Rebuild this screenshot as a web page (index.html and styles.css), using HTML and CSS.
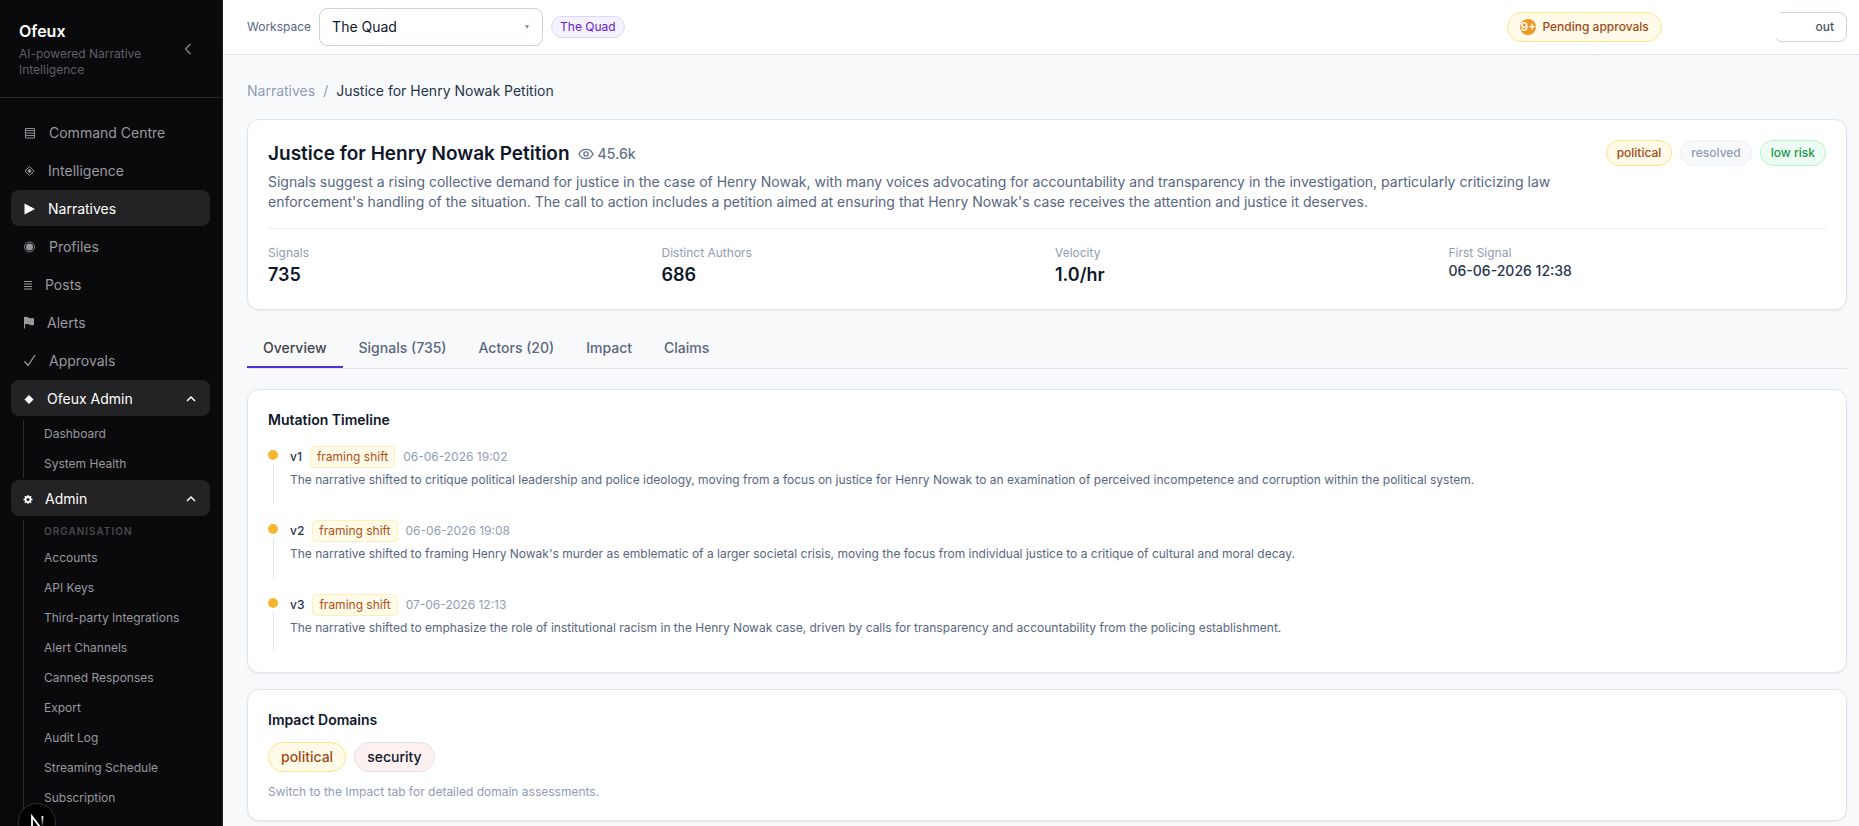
FILE: index.html
```html
<!DOCTYPE html>
<html lang="en">
<head>
    <meta charset="UTF-8">
    <meta name="viewport" content="width=device-width, initial-scale=1.0">
    <title>Justice for Henry Nowak Petition - Ofeux</title>
    <link rel="stylesheet" href="styles.css">
</head>
<body>
    <aside class="sidebar">
        <div class="brand">
            <div>
                <div class="brand-name">Ofeux</div>
                <div class="brand-tagline">AI-powered Narrative Intelligence</div>
            </div>
            <button class="collapse" type="button" aria-label="Collapse sidebar">
                <svg width="8" height="12" viewBox="0 0 8 12"><path d="M6.5 1L1.5 6l5 5" fill="none" stroke="currentColor" stroke-width="1.3"/></svg>
            </button>
        </div>

        <nav class="nav">
            <a class="nav-item" href="#">
                <svg width="14" height="14" viewBox="0 0 14 14" fill="none" stroke="currentColor" stroke-width="0.9"><path d="M2.500 2.500h9v9.500h-9zM2.500 4.500h9M2.500 7h9M2.500 9.500h9"/></svg>
                Command Centre
            </a>
            <a class="nav-item" href="#">
                <svg width="13" height="14" viewBox="0 0 13 14"><path d="M6.500 2.500L11 7 6.500 11.500 2 7z" fill="none" stroke="currentColor" stroke-width="0.9"/><path d="M6.500 4.800L8.700 7 6.500 9.200 4.300 7z" fill="currentColor"/></svg>
                Intelligence
            </a>
            <a class="nav-item active" href="#">
                <svg width="13" height="14" viewBox="0 0 13 14"><path d="M1.500 1.500L12 7 1.500 12.500z" fill="currentColor"/></svg>
                Narratives
            </a>
            <a class="nav-item" href="#">
                <svg width="14" height="14" viewBox="0 0 14 14"><circle cx="6.500" cy="7" r="5" fill="none" stroke="currentColor" stroke-width="0.800"/><circle cx="6.500" cy="7" r="3.500" fill="currentColor"/></svg>
                Profiles
            </a>
            <a class="nav-item" href="#">
                <svg width="10" height="14" viewBox="0 0 10 14"><path d="M1 3.500h8M1 6h8M1 8.500h8M1 11h8" stroke="currentColor"/></svg>
                Posts
            </a>
            <a class="nav-item" href="#">
                <svg width="12" height="14" viewBox="0 0 12 14"><path d="M1 12.500V1C3 0.500 4.500 1 6 1.700S9 2.400 11 2v7C9 9.500 7.500 9.200 6 8.600S3.500 8 2 8.400v4.100z" fill="currentColor"/></svg>
                Alerts
            </a>
            <a class="nav-item" href="#">
                <svg width="14" height="14" viewBox="0 0 14 14"><path d="M1.500 7.500L5 11.500 12 1" fill="none" stroke="currentColor" stroke-width="1.300"/></svg>
                Approvals
            </a>

            <button class="nav-item active" type="button">
                <svg width="12" height="14" viewBox="0 0 12 14"><path d="M6 3l4.500 4.500L6 12 1.500 7.500z" fill="currentColor"/></svg>
                Ofeux Admin
                <svg class="chevron" width="10" height="8" viewBox="0 0 10 8"><path d="M1 6l4-4 4 4" fill="none" stroke="currentColor" stroke-width="1.500"/></svg>
            </button>
            <div class="subnav">
                <a class="subnav-item" href="#">Dashboard</a>
                <a class="subnav-item" href="#">System Health</a>
            </div>

            <button class="nav-item active" type="button">
                <svg width="10" height="14" viewBox="0 0 10 14"><circle cx="5" cy="7.500" r="2.500" fill="none" stroke="currentColor" stroke-width="1.800"/><path d="M5 3v2M5 10v2M0.500 7.500h2M7.500 7.500h2M1.800 4.300l1.400 1.400M6.800 9.300l1.400 1.400M8.200 4.300L6.800 5.700M3.200 9.300l-1.400 1.400" stroke="currentColor" stroke-width="1.300"/></svg>
                Admin
                <svg class="chevron" width="10" height="8" viewBox="0 0 10 8"><path d="M1 6l4-4 4 4" fill="none" stroke="currentColor" stroke-width="1.500"/></svg>
            </button>
            <div class="subnav">
                <div class="subnav-heading">Organisation</div>
                <a class="subnav-item" href="#">Accounts</a>
                <a class="subnav-item" href="#">API Keys</a>
                <a class="subnav-item" href="#">Third-party Integrations</a>
                <a class="subnav-item" href="#">Alert Channels</a>
                <a class="subnav-item" href="#">Canned Responses</a>
                <a class="subnav-item" href="#">Export</a>
                <a class="subnav-item" href="#">Audit Log</a>
                <a class="subnav-item" href="#">Streaming Schedule</a>
                <a class="subnav-item" href="#">Subscription</a>
            </div>
        </nav>

        <!-- Dev tools button, sits over the bottom of the nav -->
        <button class="dev-badge" type="button" aria-label="Dev tools">
            <svg width="36" height="36" viewBox="0 0 36 36" fill="none" stroke-width="1.800">
                <defs><linearGradient id="fade" x1="0" y1="0" x2="0" y2="1"><stop offset="0" stop-color="#fff"/><stop offset="1" stop-color="#fff" stop-opacity="0"/></linearGradient></defs>
                <path d="M13 24V12.500L24 27" stroke="#fff"/>
                <path d="M22.500 12h1.800v11h-1.800z" fill="url(#fade)"/>
            </svg>
        </button>
    </aside>

    <div class="page">
        <header class="topbar">
            <label class="topbar-label" for="workspace">Workspace</label>
            <div class="select-wrap">
                <select id="workspace" class="select">
                    <option>The Quad</option>
                </select>
                <svg class="select-arrow" width="4" height="4" viewBox="0 0 4 4"><path d="M0 0h4L2 4z" fill="currentColor"/></svg>
            </div>
            <span class="pill pill-violet">The Quad</span>
            <div class="topbar-right">
                <a class="pending" href="#"><span class="count">9+</span>Pending approvals</a>
                <button class="sign-out" type="button">Sign out<span class="cover"></span></button>
            </div>
        </header>

        <main class="content">
            <nav class="breadcrumb">
                <a href="#">Narratives</a>
                <span>/</span>
                <span class="current">Justice for Henry Nowak Petition</span>
            </nav>

            <section class="card">
                <div class="summary">
                    <div class="summary-text">
                        <div class="title-row">
                            <h1>Justice for Henry Nowak Petition</h1>
                            <span class="views">
                                <svg width="16" height="16" viewBox="0 0 16 16" fill="none" stroke="currentColor" stroke-width="1.300"><path d="M1 8c1.300-3 4-4.700 7-4.700S13.700 5 15 8c-1.300 3-4 4.700-7 4.700S2.300 11 1 8z"/><circle cx="8" cy="8" r="2.100"/></svg>
                                45.6k
                            </span>
                        </div>
                        <p class="description">Signals suggest a rising collective demand for justice in the case of Henry Nowak, with many voices advocating for accountability and transparency in the investigation, particularly criticizing law enforcement's handling of the situation. The call to action includes a petition aimed at ensuring that Henry Nowak's case receives the attention and justice it deserves.</p>
                    </div>
                    <div class="tags">
                        <span class="tag amber">political</span>
                        <span class="tag grey">resolved</span>
                        <span class="tag green">low risk</span>
                    </div>
                </div>
                <dl class="stats">
                    <div><dt>Signals</dt><dd>735</dd></div>
                    <div><dt>Distinct Authors</dt><dd>686</dd></div>
                    <div><dt>Velocity</dt><dd>1.0/hr</dd></div>
                    <div><dt>First Signal</dt><dd class="date">06-06-2026 12:38</dd></div>
                </dl>
            </section>

            <div class="tabs" role="tablist">
                <button class="tab selected" type="button" role="tab">Overview</button>
                <button class="tab" type="button" role="tab">Signals (735)</button>
                <button class="tab" type="button" role="tab">Actors (20)</button>
                <button class="tab" type="button" role="tab">Impact</button>
                <button class="tab" type="button" role="tab">Claims</button>
            </div>

            <section class="card">
                <h2>Mutation Timeline</h2>
                <ol class="timeline">
                    <li class="event">
                        <div class="marker"></div>
                        <div class="event-body">
                            <div class="event-head"><b>v1</b><span class="shift">framing shift</span><time>06-06-2026 19:02</time></div>
                            <p>The narrative shifted to critique political leadership and police ideology, moving from a focus on justice for Henry Nowak to an examination of perceived incompetence and corruption within the political system.</p>
                        </div>
                    </li>
                    <li class="event">
                        <div class="marker"></div>
                        <div class="event-body">
                            <div class="event-head"><b>v2</b><span class="shift">framing shift</span><time>06-06-2026 19:08</time></div>
                            <p>The narrative shifted to framing Henry Nowak's murder as emblematic of a larger societal crisis, moving the focus from individual justice to a critique of cultural and moral decay.</p>
                        </div>
                    </li>
                    <li class="event">
                        <div class="marker"></div>
                        <div class="event-body">
                            <div class="event-head"><b>v3</b><span class="shift">framing shift</span><time>07-06-2026 12:13</time></div>
                            <p>The narrative shifted to emphasize the role of institutional racism in the Henry Nowak case, driven by calls for transparency and accountability from the policing establishment.</p>
                        </div>
                    </li>
                </ol>
            </section>

            <section class="card">
                <h2>Impact Domains</h2>
                <div class="domains">
                    <span class="domain amber">political</span>
                    <span class="domain rose">security</span>
                </div>
                <p class="hint">Switch to the Impact tab for detailed domain assessments.</p>
            </section>
        </main>
    </div>
</body>
</html>
```

FILE: styles.css
```css
* {
    box-sizing: border-box;
}

body {
    margin: 0;
    display: flex;
    height: 100vh;
    overflow: hidden;
    background-color: #f8f9fb;
    color: #0f172a;
    font-family: Inter, "Liberation Sans", sans-serif;
    font-size: 14px;
    line-height: 20px;
}

h1, h2, p, dl, dd, ol {
    margin: 0;
    padding: 0;
}

a {
    color: inherit;
    text-decoration: none;
}

button, select {
    font: inherit;
    cursor: pointer;
}

/* Sidebar */
.sidebar {
    position: relative;
    flex: none;
    width: 223px;
    overflow: hidden;
    background-color: #0a0a0c;
    border-right: 1px solid #232325;
}

.brand {
    display: flex;
    align-items: center;
    justify-content: space-between;
    height: 98px;
    padding: 0 24px 0 19px;
    border-bottom: 1px solid #28282a;
}

.brand-name {
    color: #fff;
    font-size: 16px;
    font-weight: 600;
    line-height: 24px;
    margin-bottom: 3px;
}

.brand-tagline {
    width: 140px;
    color: #5f5f68;
    font-size: 12px;
    line-height: 16px;
}

.collapse {
    display: flex;
    padding: 6px;
    border: none;
    background: none;
    color: #85858e;
}

.nav {
    display: flex;
    flex-direction: column;
    gap: 2px;
    padding: 16px 12px 0 11px;
}

.nav-item {
    display: flex;
    align-items: center;
    gap: 12px;
    flex: none;
    height: 36px;
    padding: 2px 14px 0 12px;
    border: none;
    border-radius: 8px;
    background: none;
    color: #98989f;
    text-align: left;
}

.nav-item.active {
    background-color: #232325;
    color: #fff;
}

.chevron {
    margin-left: auto;
}

.subnav {
    display: flex;
    flex-direction: column;
    gap: 2px;
    margin: 2px 0 0 12px;
    padding-left: 20px;
    border-left: 1px solid #2c2c2f;
}

.subnav-item {
    padding: 6px 0;
    color: #98989f;
    font-size: 12px;
    line-height: 16px;
}

.subnav-heading {
    color: #48484f;
    font-size: 10px;
    font-weight: 600;
    letter-spacing: 1px;
    line-height: 22px;
    text-transform: uppercase;
}

.dev-badge {
    position: absolute;
    left: 19px;
    bottom: -14px;
    width: 36px;
    height: 36px;
    padding: 0;
    border: none;
    border-radius: 50%;
    background-color: #000;
    box-shadow: 0 0 0 1px #2b2b2b;
}

/* Top bar */
.page {
    display: flex;
    flex-direction: column;
    flex: 1;
    min-width: 0;
}

.topbar {
    display: flex;
    align-items: center;
    gap: 8px;
    padding: 8px 12px 8px 24px;
    background-color: #fff;
    border-bottom: 1px solid #dfe4ee;
    font-size: 12px;
    line-height: 16px;
}

.topbar-label {
    color: #58667e;
}

.select-wrap {
    position: relative;
    width: 224px;
}

.select {
    display: block;
    width: 100%;
    height: 38px;
    padding: 0 12px;
    appearance: none;
    border: 1px solid #c8d2e0;
    border-radius: 8px;
    background-color: #fff;
    color: #0f172a;
    font-size: 14px;
}

.select-arrow {
    position: absolute;
    right: 14px;
    top: 17px;
    color: #8090a8;
    pointer-events: none;
}

.pill {
    padding: 2px 8px;
    border: 1px solid;
    border-radius: 11px;
}

.pill-violet {
    background-color: #f5f3ff;
    border-color: #ddd6fe;
    color: #6419d0;
}

.topbar-right {
    display: flex;
    align-items: center;
    gap: 112px;
    margin-left: auto;
}

.pending {
    display: flex;
    align-items: center;
    gap: 6px;
    padding: 6px 12px;
    border: 1px solid #fae588;
    border-radius: 15px;
    background-color: #fffbe8;
    color: #9f4a16;
    font-weight: 500;
}

.count {
    display: flex;
    align-items: center;
    justify-content: center;
    width: 16px;
    height: 16px;
    border-radius: 50%;
    background-color: #ee9722;
    color: #fff;
    font-weight: 600;
}

.sign-out {
    position: relative;
    padding: 6px 12px;
    border: 1px solid #c8d2e0;
    border-radius: 8px;
    background-color: #fff;
    color: #475569;
    font-weight: 500;
}

.cover {
    position: absolute;
    left: -1px;
    top: 0;
    width: 38px;
    height: 25px;
    background-color: #fff;
}

/* Content */
.content {
    padding: 24px 12px 0 24px;
}

.breadcrumb {
    display: flex;
    gap: 8px;
    margin-bottom: 18px;
    padding-top: 2px;
    color: #8f9db3;
}

.breadcrumb .current {
    color: #27344a;
}

.card {
    padding: 20px;
    background-color: #fff;
    border: 1px solid #dfe4ee;
    border-radius: 12px;
    box-shadow: 0 1px 2px rgba(15, 23, 42, 0.06);
}

.card + .card {
    margin-top: 16px;
}

.summary {
    display: flex;
    align-items: flex-start;
    gap: 16px;
}

.summary-text {
    flex: 1;
    min-width: 0;
}

.title-row {
    display: flex;
    align-items: center;
    gap: 8px;
    margin-bottom: 4px;
}

h1 {
    font-size: 19px;
    font-weight: 600;
    line-height: 28px;
}

h2 {
    font-size: 14px;
    font-weight: 600;
}

.views {
    display: flex;
    align-items: center;
    gap: 4px;
    color: #64728a;
    font-weight: 500;
}

.description {
    color: #58667e;
}

.tags, .domains {
    display: flex;
    gap: 8px;
}

.tag {
    padding: 4px 10px;
    border: 1px solid;
    border-radius: 13px;
    font-size: 12px;
    font-weight: 500;
    line-height: 16px;
}

.domain {
    padding: 4px 12px;
    border: 1px solid;
    border-radius: 15px;
    font-weight: 500;
}

.amber {
    background-color: #fffbe8;
    border-color: #fae588;
    color: #9f4a16;
}

.grey {
    background-color: #f8f9fb;
    border-color: #edf0f5;
    color: #8f9db3;
}

.green {
    background-color: #edfdf3;
    border-color: #b5f3cb;
    color: #22964a;
}

.rose {
    background-color: #fdf0f1;
    border-color: #e2e0e8;
    color: #0f172a;
}

.stats {
    display: grid;
    grid-template-columns: repeat(4, 1fr);
    gap: 16px;
    margin-top: 16px;
    padding-top: 16px;
    border-top: 1px solid #edf0f6;
}

.stats dt {
    color: #8f9db3;
    font-size: 12px;
    line-height: 16px;
}

.stats dd {
    font-size: 18px;
    font-weight: 600;
    line-height: 28px;
}

.stats .date {
    color: #27344a;
    font-size: 14px;
    font-weight: 500;
    line-height: 20px;
}

.tabs {
    display: flex;
    margin: 20px 0;
    border-bottom: 1px solid #dfe4ee;
}

.tab {
    padding: 8px 16px;
    border: none;
    border-bottom: 2px solid transparent;
    background: none;
    color: #58667e;
    font-weight: 500;
}

.tab.selected {
    border-bottom-color: #4f32d8;
    color: #44444c;
}

.timeline {
    display: flex;
    flex-direction: column;
    gap: 16px;
    margin-top: 16px;
    list-style: none;
    font-size: 12px;
    line-height: 16px;
}

.event {
    display: flex;
    gap: 12px;
}

.marker {
    display: flex;
    flex-direction: column;
    align-items: center;
    gap: 4px;
    width: 10px;
    padding-top: 4px;
}

.marker::before {
    content: "";
    width: 10px;
    height: 10px;
    border-radius: 50%;
    background-color: #f5b731;
}

.marker::after {
    content: "";
    flex: 1;
    width: 1px;
    background-color: #dfe4ee;
}

.event-body {
    padding-bottom: 16px;
    color: #58667e;
}

.event-head {
    display: flex;
    align-items: center;
    gap: 8px;
    margin-bottom: 4px;
    color: #8f9db3;
}

.event-head b {
    color: #27344a;
    font-weight: 500;
}

.shift {
    padding: 2px 6px;
    border: 1px solid #fdf0b8;
    border-radius: 4px;
    background-color: #fffbe8;
    color: #b04f14;
}

.domains {
    margin: 12px 0;
}

.hint {
    color: #8f9db3;
    font-size: 12px;
    line-height: 16px;
}
```
